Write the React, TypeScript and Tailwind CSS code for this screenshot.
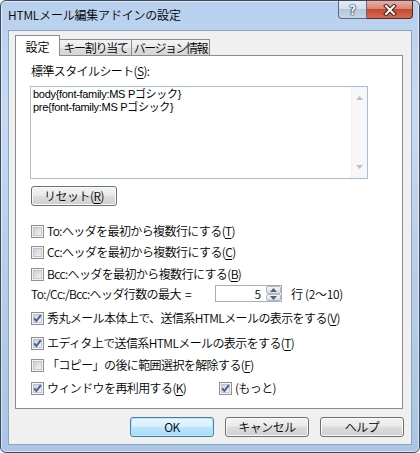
import type { ReactNode } from "react";

const FONT = "font-['Noto_Sans_CJK_JP',sans-serif]";

const CheckBox = ({ checked }: { checked?: boolean }) => (
  <svg width="13" height="13" viewBox="0 0 13 13" className="shrink-0">
    <defs>
      <linearGradient id="cbInner" x1="0" y1="0" x2="1" y2="1">
        <stop offset="0" stopColor="#c9cdd3" />
        <stop offset="1" stopColor="#f6f6f6" />
      </linearGradient>
    </defs>
    <rect x="0.5" y="0.5" width="12" height="12" fill="#f4f4f4" stroke="#8f8f8f" />
    <rect x="2.5" y="2.5" width="8" height="8" fill="url(#cbInner)" stroke="#c2c5ca" />
    {checked && (
      <path d="M3.2 6.3 L5.4 9 L9.8 3.2" fill="none" stroke="#4a5d9e" strokeWidth="2" />
    )}
  </svg>
);

const Check = ({
  checked,
  children,
  className = "",
}: {
  checked?: boolean;
  children: ReactNode;
  className?: string;
}) => (
  <div className={`flex items-center h-[16px] ${className}`}>
    <CheckBox checked={checked} />
    <span className="ml-[3px] whitespace-nowrap tracking-[-0.6px]">{children}</span>
  </div>
);

const U = ({ children }: { children: ReactNode }) => (
  <span className="underline underline-offset-[2px]">{children}</span>
);

const WinButton = ({
  children,
  primary,
  className = "",
}: {
  children: ReactNode;
  primary?: boolean;
  className?: string;
}) => (
  <div
    className={`h-[20px] flex items-center justify-center rounded-[3px] border text-[12px] tracking-[-0.5px] ${
      primary
        ? "border-[#3c7fb1] bg-[linear-gradient(to_bottom,#eaf6fd_0%,#d9f0fc_45%,#bee6fd_50%,#a7d9f5_100%)] shadow-[inset_0_0_0_1px_#bfe6fa]"
        : "border-[#707070] bg-[linear-gradient(to_bottom,#f2f2f2_0%,#ebebeb_45%,#dddddd_50%,#cfcfcf_100%)] shadow-[inset_0_0_0_1px_#fafafa]"
    } ${className}`}
  >
    {children}
  </div>
);

const Arrow = ({ up }: { up?: boolean }) => (
  <svg width="7" height="4" viewBox="0 0 7 4">
    <path d={up ? "M0 4 L3.5 0 L7 4 Z" : "M0 0 L3.5 4 L7 0 Z"} fill="#4d6185" />
  </svg>
);

export default function App() {
  return (
    <div className={`${FONT} font-[350] text-[12px] text-black w-[420px] h-[453px] overflow-hidden`}>
      <div className="w-[420px] h-[453px] flex flex-col rounded-[6px] border border-[#3e4b5e] bg-[linear-gradient(to_bottom,#b8d0ee_0%,#c6daf2_25%,#b6ceeb_60%,#abc5e6_100%)] shadow-[inset_0_0_0_1px_rgba(255,255,255,0.55)]">
        {/* title bar */}
        <div className="h-[29px] flex">
          <div className="flex-1 pl-[7px] pt-[6px] leading-[16px] text-[12px] tracking-[-0.2px] whitespace-nowrap">
            HTMLメール編集アドインの設定
          </div>
          <div className="flex mr-[6px] h-[18px]">
            <div className="w-[29px] h-[18px] flex items-center justify-center rounded-bl-[4px] border border-t-0 border-[#5c6b82] bg-[linear-gradient(to_bottom,#e4ecf6_0%,#d3dfec_45%,#b6c7dc_50%,#c6d5e6_100%)] text-white font-bold text-[13px] leading-none [text-shadow:0_0_1px_#1d2a3d,0_0_1px_#1d2a3d,0_0_2px_#1d2a3d]">
              ?
            </div>
            <div className="w-[46px] h-[18px] flex items-center justify-center rounded-br-[4px] border border-l-0 border-t-0 border-[#5a2a22] bg-[linear-gradient(to_bottom,#eab0a2_0%,#d98672_45%,#c54a31_50%,#d56b52_100%)]">
              <svg width="14" height="12" viewBox="0 0 14 12">
                <path d="M3 2 L11 10 M11 2 L3 10" stroke="#3b1f1a" strokeWidth="4" strokeLinecap="square" />
                <path d="M3 2 L11 10 M11 2 L3 10" stroke="#ffffff" strokeWidth="2" strokeLinecap="square" />
              </svg>
            </div>
          </div>
        </div>

        {/* client area */}
        <div className="mx-[7px] h-[415px] border border-[#8ea3bf] bg-[#f0f0f0] flex flex-col">
          <div className="px-[6px] pt-[4px]">
            {/* tabs */}
            <div className="flex items-end h-[21px] -mb-px relative z-10">
              <div className="w-[45px] h-[21px] bg-white border border-b-0 border-[#898c95] flex items-start justify-center pt-[2px] text-[12px]">
                設定
              </div>
              <div className="-ml-px mb-px w-[73px] h-[16px] border border-b-0 border-[#898c95] bg-[linear-gradient(to_bottom,#f3f3f3_0%,#ebebeb_50%,#dddddd_51%,#d6d6d6_100%)] flex items-center justify-center tracking-[-1.3px] whitespace-nowrap">
                キー割り当て
              </div>
              <div className="-ml-px mb-px w-[79px] h-[16px] border border-b-0 border-[#898c95] bg-[linear-gradient(to_bottom,#f3f3f3_0%,#ebebeb_50%,#dddddd_51%,#d6d6d6_100%)] flex items-center justify-center tracking-[-1.5px] whitespace-nowrap">
                バージョン情報
              </div>
            </div>

            {/* panel */}
            <div className="w-[388px] h-[354px] bg-white border border-[#898c95] flex flex-col">
              <div className="mt-[7px] ml-[15px] h-[16px] leading-[16px] tracking-[-0.6px]">
                標準スタイルシート(<U>S</U>):
              </div>
              <div className="mt-[7px] ml-[14px] w-[338px] h-[93px] border border-[#a4bedc] flex">
                <div className="flex-1 pl-[2px] pt-[1px] font-['Liberation_Sans','Noto_Sans_CJK_JP',sans-serif] font-normal text-[11px] leading-[13px] tracking-[-0.3px]">
                  <div>body{"{"}font-family:MS Pゴシック{"}"}</div>
                  <div>pre{"{"}font-family:MS Pゴシック{"}"}</div>
                </div>
                <div className="w-[16px] bg-[#f7f7f7] border-l border-[#f0f0f0] flex flex-col items-center justify-between py-[9px]">
                  <svg width="7" height="4" viewBox="0 0 7 4">
                    <path d="M0 4 L3.5 0 L7 4 Z" fill="#bfbfbf" />
                  </svg>
                  <svg width="7" height="4" viewBox="0 0 7 4">
                    <path d="M0 0 L3.5 4 L7 0 Z" fill="#bfbfbf" />
                  </svg>
                </div>
              </div>
              <WinButton className="mt-[7px] ml-[15px] w-[86px]">
                リセット(<U>R</U>)
              </WinButton>

              <div className="ml-[15px] flex flex-col">
                <Check className="mt-[17px]">
                  To:ヘッダを最初から複数行にする(<U>T</U>)
                </Check>
                <Check className="mt-[5px]">
                  Cc:ヘッダを最初から複数行にする(<U>C</U>)
                </Check>
                <Check className="mt-[6px]">
                  Bcc:ヘッダを最初から複数行にする(<U>B</U>)
                </Check>
                <div className="mt-[3px] flex items-center h-[17px]">
                  <div className="w-[184px] whitespace-nowrap tracking-[-0.6px]">
                    To:/Cc:/Bcc:ヘッダ行数の最大&nbsp;&nbsp;=
                  </div>
                  <div className="w-[67px] h-[17px] border border-[#abadb3] bg-white flex">
                    <div className="flex-1 text-right pr-[5px] leading-[15px]">5</div>
                    <div className="w-[15px] flex flex-col">
                      <div className="h-[8px] flex items-center justify-center border border-[#b3b8c2] rounded-[2px] bg-[linear-gradient(to_bottom,#f5f5f5,#dcdcdc)]">
                        <Arrow up />
                      </div>
                      <div className="h-[7px] flex items-center justify-center border border-[#b3b8c2] rounded-[2px] bg-[linear-gradient(to_bottom,#f5f5f5,#dcdcdc)]">
                        <Arrow />
                      </div>
                    </div>
                  </div>
                  <div className="ml-[9px] whitespace-nowrap tracking-[-0.3px]">行 (2〜10)</div>
                </div>
                <Check checked className="mt-[8px]">
                  秀丸メール本体上で、送信系HTMLメールの表示をする(<U>V</U>)
                </Check>
                <Check checked className="mt-[9px]">
                  エディタ上で送信系HTMLメールの表示をする(<U>T</U>)
                </Check>
                <Check className="mt-[6px]">
                  「コピー」の後に範囲選択を解除する(<U>F</U>)
                </Check>
                <div className="mt-[7px] flex">
                  <Check checked className="w-[188px]">
                    ウィンドウを再利用する(<U>K</U>)
                  </Check>
                  <Check checked>(もっと)</Check>
                </div>
              </div>
            </div>
          </div>

          {/* dialog buttons */}
          <div className="mt-[8px] flex justify-end gap-[11px] pr-[7px]">
            <WinButton primary className="w-[84px]">
              OK
            </WinButton>
            <WinButton className="w-[84px]">キャンセル</WinButton>
            <WinButton className="w-[84px]">ヘルプ</WinButton>
          </div>
        </div>
      </div>
    </div>
  );
}
